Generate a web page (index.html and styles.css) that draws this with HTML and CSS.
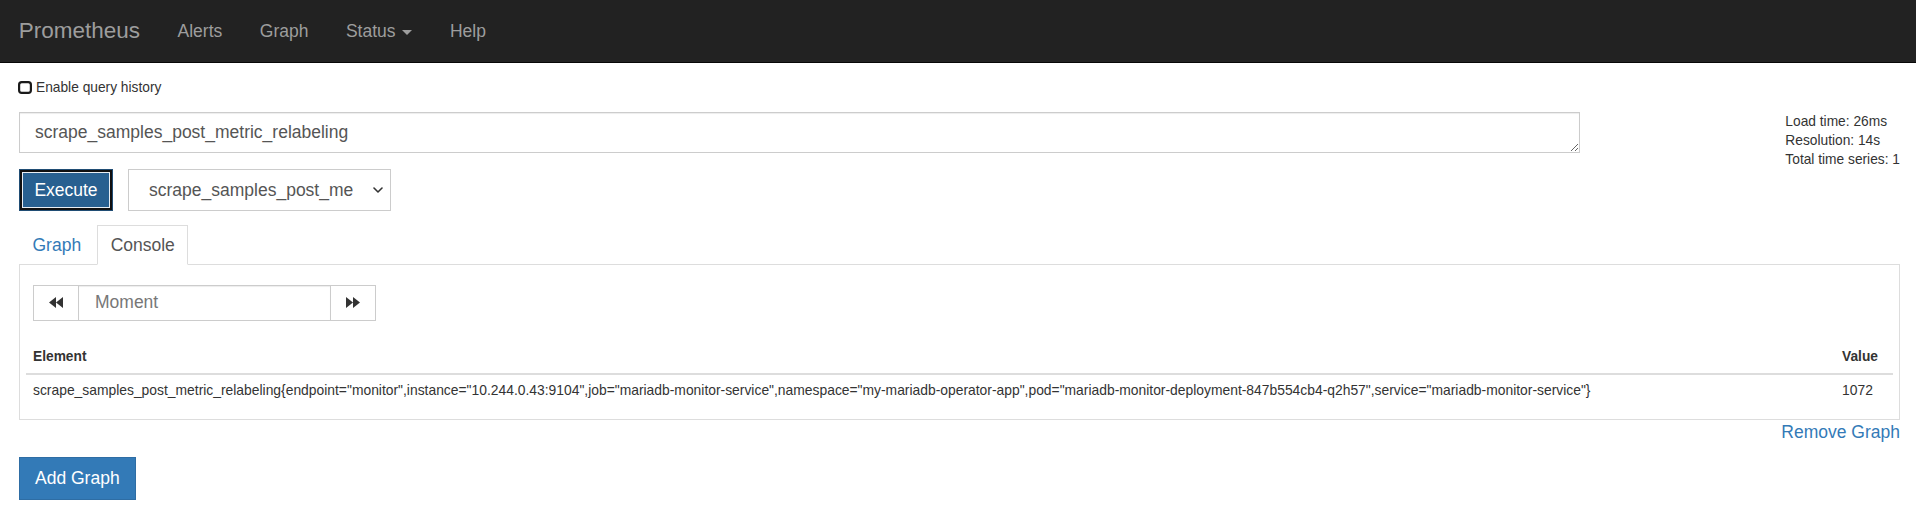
FILE: index.html
```html
<!DOCTYPE html>
<html lang="en">
<head>
<meta charset="utf-8">
<title>Prometheus Time Series Collection and Processing Server</title>
<link rel="stylesheet" href="styles.css">
</head>
<body>
<nav class="navbar">
  <a class="brand" href="#">Prometheus</a>
  <ul class="nav-links">
    <li><a href="#">Alerts</a></li>
    <li><a href="#">Graph</a></li>
    <li><a href="#">Status <span class="caret"></span></a></li>
    <li><a href="#">Help</a></li>
  </ul>
</nav>
<main class="page">
  <div class="query-history">
    <svg class="unchecked" width="14" height="13" viewBox="0 0 14 13" aria-hidden="true"><rect x="1.1" y="1.1" width="11.8" height="10.8" rx="2.6" ry="2.6" fill="none" stroke="#1a1a1a" stroke-width="2.2"/></svg>
    <span>Enable query history</span>
  </div>
  <div class="graph-panel">
    <div class="query-row">
      <div class="query-col">
        <textarea class="expr-input" rows="1">scrape_samples_post_metric_relabeling</textarea>
      </div>
      <div class="eval-stats">
        <div>Load time: 26ms</div>
        <div>Resolution: 14s</div>
        <div>Total time series: 1</div>
      </div>
    </div>
    <div class="exec-row">
      <button class="btn-execute" type="button">Execute</button>
      <div class="select-wrap">
        <select class="metric-select">
          <option>scrape_samples_post_metric_relabeling</option>
        </select>
        <svg class="chevron" width="10" height="6" viewBox="0 0 10 6" aria-hidden="true"><path d="M1 1l4 4 4-4" fill="none" stroke="#333" stroke-width="1.6" stroke-linecap="round" stroke-linejoin="round"/></svg>
      </div>
    </div>
    <ul class="tabs">
      <li><a href="#">Graph</a></li>
      <li class="active"><a href="#">Console</a></li>
    </ul>
    <div class="tab-content">
      <div class="time-controls">
        <button class="step-btn" type="button" aria-label="Back"><svg width="14" height="11" viewBox="0 0 14 11"><path d="M0 5.5L7 0v11z M7 5.5L14 0v11z" fill="#333"/></svg></button>
        <input class="moment-input" type="text" placeholder="Moment">
        <button class="step-btn" type="button" aria-label="Forward"><svg width="14" height="11" viewBox="0 0 14 11"><path d="M14 5.5L7 0v11z M7 5.5L0 0v11z" fill="#333"/></svg></button>
      </div>
      <table class="results">
        <thead>
          <tr><th>Element</th><th class="value-col">Value</th></tr>
        </thead>
        <tbody>
          <tr><td>scrape_samples_post_metric_relabeling{endpoint="monitor",instance="10.244.0.43:9104",job="mariadb-monitor-service",namespace="my-mariadb-operator-app",pod="mariadb-monitor-deployment-847b554cb4-q2h57",service="mariadb-monitor-service"}</td><td class="value-col">1072</td></tr>
        </tbody>
      </table>
    </div>
    <div class="remove-row"><a href="#">Remove Graph</a></div>
  </div>
  <button class="btn-add" type="button">Add Graph</button>
</main>
</body>
</html>
```

FILE: styles.css
```css
* { box-sizing: border-box; }

html, body { margin: 0; padding: 0; }

body {
  font-family: "Liberation Sans", Arial, Helvetica, sans-serif;
  font-size: 17.5px;
  line-height: 25px;
  color: #333;
  background: #fff;
}

button, input, select, textarea {
  font-family: inherit;
  font-size: inherit;
  line-height: inherit;
}

a { color: #337ab7; text-decoration: none; }

/* Navbar */
.navbar {
  display: flex;
  height: 63px;
  background: #222;
  border-bottom: 1px solid #080808;
}

.brand {
  display: block;
  padding: 0 18.75px;
  font-size: 22.5px;
  line-height: 62px;
  color: #9d9d9d;
}

.nav-links {
  display: flex;
  margin: 0;
  padding: 0;
  list-style: none;
}

.nav-links a {
  display: block;
  padding: 0 18.75px;
  line-height: 62px;
  color: #9d9d9d;
}

.caret {
  display: inline-block;
  width: 0;
  height: 0;
  margin-left: 2px;
  vertical-align: middle;
  border-top: 5px solid #9d9d9d;
  border-left: 5px solid transparent;
  border-right: 5px solid transparent;
}

/* Page */
.page {
  padding: 0 16px 0 19px;
}

.query-history {
  display: flex;
  align-items: center;
  gap: 4px;
  height: 25px;
  margin: 12px 0 12px -1px;
  font-size: 13.75px;
  color: #333;
}

.unchecked { display: block; }

.query-row {
  display: flex;
  align-items: flex-start;
}

.query-col {
  width: calc((100% + 37.5px) * 10 / 12 - 37.5px);
}

.expr-input {
  display: block;
  width: 100%;
  height: 41px;
  padding: 6.5px 15px;
  color: #555;
  background: #fff;
  border: 1px solid #ccc;
  border-radius: 0;
  box-shadow: inset 0 1px 1px rgba(0, 0, 0, .075);
  resize: vertical;
  overflow: hidden;
}

.eval-stats {
  margin-left: auto;
  font-size: 13.75px;
  line-height: 19px;
  color: #333;
}

.exec-row {
  display: flex;
  gap: 15px;
  height: 42px;
}

.btn-execute {
  width: 94px;
  height: 42px;
  padding: 0;
  color: #fff;
  background: #286090;
  border: 1px solid #204d74;
  border-radius: 0;
  outline: 2px solid #101010;
  outline-offset: -3px;
  box-shadow: inset 0 0 0 3px #e9eef3;
}

.select-wrap {
  position: relative;
  width: 263px;
  height: 42px;
}

.metric-select {
  width: 100%;
  height: 100%;
  padding: 0 37px 0 20px;
  color: #555;
  background: #fff;
  border: 1px solid #ccc;
  border-radius: 0;
  appearance: none;
  -webkit-appearance: none;
}

.chevron {
  position: absolute;
  right: 8px;
  top: 18px;
}

/* Tabs */
.tabs {
  display: flex;
  margin: 14px 0 0;
  padding: 0;
  list-style: none;
  border-bottom: 1px solid #ddd;
}

.tabs li {
  margin-right: 2.5px;
  margin-bottom: -1px;
}

.tabs a {
  display: block;
  padding: 6.5px 12.5px;
  border: 1px solid transparent;
  line-height: 25px;
  color: #337ab7;
}

.tabs .active a {
  color: #555;
  background: #fff;
  border-color: #ddd;
  border-bottom-color: transparent;
}

.tab-content {
  padding: 19.5px 6px 12.5px;
  border: 1px solid #ddd;
  border-top: none;
}

.time-controls {
  display: flex;
  height: 36px;
  margin-left: 7px;
}

.step-btn {
  display: flex;
  align-items: center;
  justify-content: center;
  width: 46px;
  height: 36px;
  padding: 0;
  background: #fff;
  border: 1px solid #ccc;
  border-radius: 0;
}

.moment-input {
  width: 252.5px;
  height: 36px;
  margin: 0 -1px;
  padding: 0 16px;
  color: #555;
  border: 1px solid #ccc;
  border-radius: 0;
  box-shadow: inset 0 1px 1px rgba(0, 0, 0, .075);
}

.moment-input::placeholder { color: #777; }

.results {
  width: 100%;
  margin-top: 20px;
  border-collapse: collapse;
  font-size: 13.75px;
  line-height: 19.6px;
}

.results th,
.results td {
  padding: 6.25px 7px;
  text-align: left;
  vertical-align: top;
}

.results th {
  font-weight: bold;
  border-bottom: 2.5px solid #ddd;
}

.results td {
  font-size: 13.87px;
  border-top: 1px solid #ddd;
}

.results .value-col {
  width: 1%;
  white-space: nowrap;
  padding-right: 15px;
}

.remove-row {
  height: 25px;
  text-align: right;
}

.btn-add {
  display: block;
  height: 43px;
  margin-top: 12px;
  padding: 0 15px;
  color: #fff;
  background: #337ab7;
  border: 1px solid #2e6da4;
  border-radius: 0;
}
```
